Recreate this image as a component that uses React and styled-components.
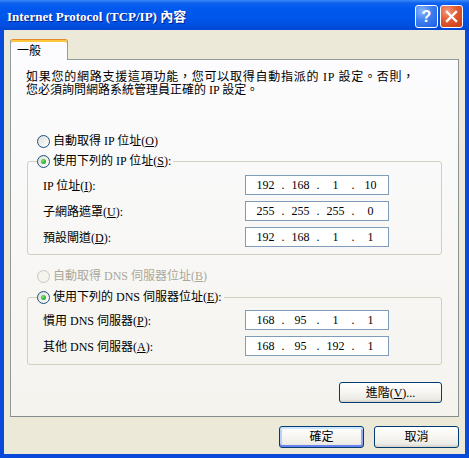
import React from "react";
import styled, { createGlobalStyle } from "styled-components";

const GlobalStyle = createGlobalStyle`
  html, body {
    margin: 0;
    padding: 0;
    background: #ffffff;
  }
  body {
    font-family: "Liberation Serif", "Noto Sans CJK TC", serif;
    font-size: 12px;
    color: #000000;
  }
`;

const Window = styled.div`
  width: 469px;
  height: 458px;
  display: flex;
  flex-direction: column;
  overflow: hidden;
`;

const TitleBar = styled.div`
  height: 30px;
  flex: none;
  box-sizing: border-box;
  display: flex;
  align-items: center;
  padding: 3px 6px 0 7px;
  background: linear-gradient(
    to bottom,
    #3A89F8 0%,
    #0F62EE 10%,
    #0058EE 30%,
    #0056EA 60%,
    #004FE0 85%,
    #0046D2 100%
  );
`;

const Title = styled.div`
  flex: 1;
  color: #ffffff;
  font-weight: bold;
  font-size: 13px;
  line-height: 16px;
  white-space: nowrap;
  text-shadow: 1px 1px 0 #0A1E8A;
`;

const CaptionButtons = styled.div`
  display: flex;
  gap: 2px;
`;

const CaptionButton = styled.div`
  width: 23px;
  height: 23px;
  box-sizing: border-box;
  border: 1px solid #ffffff;
  border-radius: 3px;
  display: flex;
  align-items: center;
  justify-content: center;
  color: #ffffff;
  font-family: "Liberation Sans", sans-serif;
  font-weight: bold;
  font-size: 16px;
  background: ${(p) =>
    p.$close
      ? "radial-gradient(circle at 30% 25%, #F29A7C 0%, #E2582F 45%, #C63B15 100%)"
      : "radial-gradient(circle at 30% 25%, #8CB8FA 0%, #3D7EF0 45%, #1E5CE0 100%)"};
`;

const Body = styled.div`
  flex: 1;
  display: flex;
  flex-direction: column;
  box-sizing: border-box;
  background: #ECE9D8;
  border: solid #0A4ADB;
  border-width: 0 4px 4px;
  padding: 9px 6px 0;
`;

const TabStrip = styled.div`
  display: flex;
  height: 20px;
`;

const Tab = styled.div`
  position: relative;
  z-index: 1;
  width: 58px;
  height: 21px;
  box-sizing: border-box;
  border: 1px solid #919B9C;
  border-top-color: #E68B2C;
  border-bottom: none;
  border-radius: 3px 3px 0 0;
  background: #FCFCFE;
  box-shadow: inset 0 2px 0 #FFC83C;
  display: flex;
  align-items: center;
  padding: 2px 0 0 6px;
  line-height: 14px;
`;

const Panel = styled.div`
  height: 358px;
  box-sizing: border-box;
  border: 1px solid #919B9C;
  border-right-color: #8A9293;
  border-bottom-color: #858D8E;
  background: linear-gradient(to bottom, #FCFCFE 0%, #F4F3EE 100%);
  padding: 0 16px;
  display: flex;
  flex-direction: column;
`;

const Description = styled.div`
  margin: 11px 0 0 -1px;
  line-height: 13px;
  white-space: nowrap;
`;

const DescLine = styled.div`
  letter-spacing: ${(p) => p.$spacing || 0}px;
`;

const RadioRow = styled.div`
  display: flex;
  align-items: center;
  gap: 3px;
  height: 16px;
  margin-top: ${(p) => p.$top || 0}px;
  margin-left: ${(p) => (p.$indent ? 10 : 0)}px;
  padding-right: 2px;
  line-height: 16px;
  white-space: nowrap;
  color: ${(p) => (p.$disabled ? "#ACA899" : "#000000")};
`;

const RadioCircle = styled.span`
  width: 13px;
  height: 13px;
  flex: none;
  box-sizing: border-box;
  border-radius: 50%;
  border: 1px solid ${(p) => (p.$disabled ? "#CAC8BB" : "#1C5180")};
  background: ${(p) =>
    p.$disabled
      ? "#F4F3EE"
      : "linear-gradient(135deg, #DCDCD7 0%, #F0F0EA 50%, #FFFFFF 100%)"};
  display: flex;
  align-items: center;
  justify-content: center;

  &::after {
    content: "";
    display: ${(p) => (p.$checked ? "block" : "none")};
    width: 5px;
    height: 5px;
    border-radius: 50%;
    background: radial-gradient(circle at 35% 35%, #7BE37A 0%, #3DB93B 50%, #1F8E1F 100%);
  }
`;

const GroupBox = styled.fieldset`
  margin: ${(p) => p.$top}px 0 0;
  padding: ${(p) => p.$padTop}px 0 ${(p) => p.$padBottom}px;
  border: 1px solid #D0D0BF;
  border-radius: 3px;
  min-inline-size: 0;
  display: flex;
  flex-direction: column;
  gap: 6px;
`;

const Legend = styled.legend`
  margin-left: 9px;
  padding: 0;
`;

const FieldRow = styled.div`
  display: grid;
  grid-template-columns: 202px 144px;
  align-items: center;
  padding-left: 15px;
  height: 20px;
  white-space: nowrap;
`;

const IpBox = styled.div`
  width: 144px;
  height: 20px;
  box-sizing: border-box;
  border: 1px solid #7F9DB9;
  background: #ffffff;
  display: flex;
  align-items: center;
  padding-left: 5px;
  line-height: 16px;
`;

const Octet = styled.span`
  width: 29px;
  text-align: center;
`;

const Dot = styled.span`
  width: 6px;
  text-align: center;
`;

const ButtonRow = styled.div`
  display: flex;
  justify-content: flex-end;
  gap: 10px;
  margin-top: ${(p) => p.$top || 0}px;
  padding-top: ${(p) => p.$padTop || 0}px;
`;

const Button = styled.button`
  width: ${(p) => p.$width}px;
  height: ${(p) => p.$height}px;
  box-sizing: border-box;
  border: 1px solid #003C74;
  border-radius: 3px;
  font-family: "Liberation Serif", "Noto Sans CJK TC", serif;
  font-size: 12px;
  color: #000000;
  padding: 0;
  line-height: 14px;
  background: linear-gradient(to bottom, #FFFFFF 0%, #F6F5F1 50%, #ECEBE6 85%, #D6D0C5 100%);
  box-shadow: ${(p) =>
    p.$default
      ? "inset 0 2px 0 #CEE7FF, inset 0 -2px 0 #6982EE, inset 2px 0 0 #B7D0F8, inset -2px 0 0 #8DA8F0"
      : "none"};
`;

function Radio({ checked, disabled, indent, top, children }) {
  return (
    <RadioRow $disabled={disabled} $indent={indent} $top={top}>
      <RadioCircle $checked={checked} $disabled={disabled} />
      <span>{children}</span>
    </RadioRow>
  );
}

function IpField({ value }) {
  const parts = value.split(".");
  return (
    <IpBox>
      {parts.map((part, i) => (
        <React.Fragment key={i}>
          {i > 0 && <Dot>.</Dot>}
          <Octet>{part}</Octet>
        </React.Fragment>
      ))}
    </IpBox>
  );
}

function Field({ label, value }) {
  return (
    <FieldRow>
      <span>{label}</span>
      <IpField value={value} />
    </FieldRow>
  );
}

export default function App() {
  return (
    <>
      <GlobalStyle />
      <Window>
        <TitleBar>
          <Title>Internet Protocol (TCP/IP) 內容</Title>
          <CaptionButtons>
            <CaptionButton>?</CaptionButton>
            <CaptionButton $close>
              <svg width="13" height="13" viewBox="0 0 13 13">
                <path
                  d="M2 2 L11 11 M11 2 L2 11"
                  stroke="#ffffff"
                  strokeWidth="2.4"
                  strokeLinecap="square"
                />
              </svg>
            </CaptionButton>
          </CaptionButtons>
        </TitleBar>

        <Body>
          <TabStrip>
            <Tab>一般</Tab>
          </TabStrip>
          <Panel>
            <Description>
              <DescLine $spacing={0.75}>
                如果您的網路支援這項功能，您可以取得自動指派的 IP 設定。否則，
              </DescLine>
              <DescLine>您必須詢問網路系統管理員正確的 IP 設定。</DescLine>
            </Description>

            <Radio indent top={36}>
              自動取得 IP 位址(<u>O</u>)
            </Radio>
            <GroupBox $top={4} $padTop={6} $padBottom={7}>
              <Legend>
                <Radio checked>
                  使用下列的 IP 位址(<u>S</u>):
                </Radio>
              </Legend>
              <Field label={<>IP 位址(<u>I</u>):</>} value="192.168.1.10" />
              <Field label={<>子網路遮罩(<u>U</u>):</>} value="255.255.255.0" />
              <Field label={<>預設閘道(<u>D</u>):</>} value="192.168.1.1" />
            </GroupBox>

            <Radio indent disabled top={13}>
              自動取得 DNS 伺服器位址(<u>B</u>)
            </Radio>
            <GroupBox $top={5} $padTop={5} $padBottom={8}>
              <Legend>
                <Radio checked>
                  使用下列的 DNS 伺服器位址(<u>E</u>):
                </Radio>
              </Legend>
              <Field label={<>慣用 DNS 伺服器(<u>P</u>):</>} value="168.95.1.1" />
              <Field label={<>其他 DNS 伺服器(<u>A</u>):</>} value="168.95.192.1" />
            </GroupBox>

            <ButtonRow $top={17}>
              <Button $width={103} $height={21}>
                進階(<u>V</u>)...
              </Button>
            </ButtonRow>
          </Panel>

          <ButtonRow $padTop={9}>
            <Button $width={85} $height={22} $default>
              確定
            </Button>
            <Button $width={85} $height={22}>
              取消
            </Button>
          </ButtonRow>
        </Body>
      </Window>
    </>
  );
}
